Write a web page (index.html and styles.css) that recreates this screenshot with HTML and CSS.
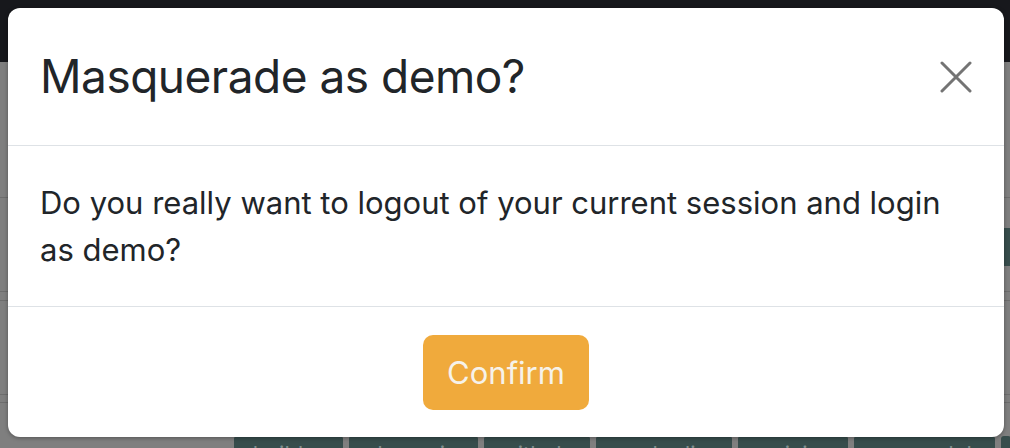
FILE: index.html
```html
<!DOCTYPE html>
<html lang="en">
<head>
<meta charset="utf-8">
<title>Masquerade as demo?</title>
<link rel="stylesheet" href="styles.css">
</head>
<body>
<div class="page">
  <div class="topbar"></div>
  <div class="content">
    <div class="row row-a"></div>
    <div class="row row-b"></div>
    <div class="row row-c"></div>
    <div class="row row-d"></div>
    <div class="row row-e"></div>
    <div class="tags">
      <span class="tag t1">builder</span>
      <span class="tag t2">dynamic</span>
      <span class="tag t3">github</span>
      <span class="tag t4">mokedia</span>
      <span class="tag t5">mixin</span>
      <span class="tag t6">newmodule</span>
      <span class="tag t7"></span>
    </div>
  </div>
  <div class="side-chip"></div>
</div>

<div class="modal" role="dialog" aria-labelledby="mtitle">
  <div class="modal-header">
    <h5 class="modal-title" id="mtitle">Masquerade as demo?</h5>
    <button class="close" aria-label="Close">
      <svg viewBox="0 0 32 32" width="32" height="32"><path d="M2 2 L30 30 M30 2 L2 30" stroke="#747474" stroke-width="3" stroke-linecap="round" fill="none"/></svg>
    </button>
  </div>
  <div class="modal-body">Do you really want to logout of your current session and login as demo?</div>
  <div class="modal-footer">
    <button class="btn-confirm">Confirm</button>
  </div>
</div>
</body>
</html>
```
FILE: styles.css
```css
html, body { margin: 0; padding: 0; }
body {
  width: 1010px;
  height: 448px;
  overflow: hidden;
  background: #7f7f7f;
  font-family: Inter, "Noto Sans", sans-serif;
}
.page { position: relative; height: 448px; overflow: hidden; }
.topbar { height: 62px; background: #17181c; }
.row { border-bottom: 1px solid #6d6d6d; }
.row-a { height: 135px; }
.row-b { height: 93px; }
.row-c { height: 8px; }
.row-d { height: 93px; }
.row-e { height: 7px; }
.tags {
  display: flex;
  gap: 6px;
  margin-top: 33px;
  padding-left: 234px;
}
.tag {
  flex: none;
  box-sizing: border-box;
  height: 30px;
  padding: 5px 0 0;
  text-align: center;
  background: #374d4c;
  color: #7f8f8e;
  font-size: 22px;
  border-radius: 3px;
}
.t1 { width: 109px; }
.t2 { width: 129px; }
.t3 { width: 106px; }
.t4 { width: 136px; }
.t5 { width: 110px; }
.t6 { width: 141px; }
.t7 { width: 10px; }
.side-chip {
  position: absolute;
  right: 0;
  top: 228px;
  width: 8px;
  height: 38px;
  background: #374d4c;
}

.modal {
  position: absolute;
  left: 8px;
  top: 8px;
  width: 996px;
  background: #fff;
  border-radius: 12px;
  box-shadow: 0 1px 4px rgba(0,0,0,.35);
  overflow: hidden;
}
.modal-header {
  display: flex;
  align-items: center;
  justify-content: space-between;
  padding: 32px;
  border-bottom: 1px solid #dee2e6;
}
.modal-title {
  margin: 0;
  font-size: 46px;
  line-height: 73px;
  font-weight: 430;
  color: #212529;
  letter-spacing: -0.5px;
}
.close {
  border: 0;
  background: none;
  padding: 0;
  width: 32px;
  height: 32px;
  display: flex;
}
.modal-body {
  padding: 33px 32px;
  font-size: 31px;
  line-height: 47px;
  color: #212529;
  border-bottom: 1px solid #dee2e6;
}
.modal-footer {
  display: flex;
  justify-content: center;
  padding: 28px 0 27px;
}
.btn-confirm {
  width: 166px;
  height: 75px;
  border: 0;
  border-radius: 10px;
  background: #f0aa3c;
  color: #f6f2ea;
  font-family: Inter, "Noto Sans", sans-serif;
  font-size: 31px;
}
```
